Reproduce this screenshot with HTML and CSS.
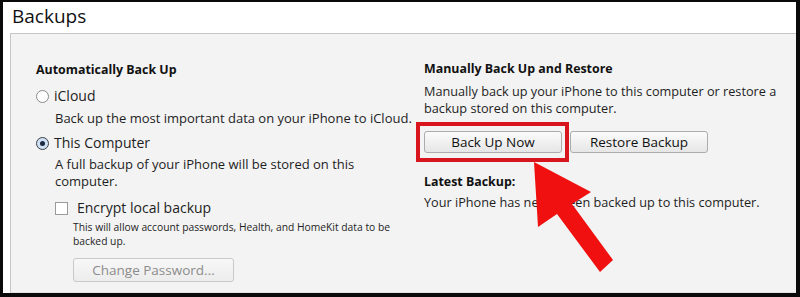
FILE: index.html
```html
<!DOCTYPE html>
<html>

<head>
    <meta charset="UTF-8">
    <title>Backups</title>
    <link rel="stylesheet" href="styles.css">
</head>

<body>
    <div class="window">
        <div class="title">Backups</div>
        <div class="panel">
            <div class="col col-auto">
                <h3>Automatically Back Up</h3>
                <div class="option option-icloud"><span class="radio"></span>iCloud</div>
                <p class="desc">Back up the most important data on your iPhone to iCloud.</p>
                <div class="option option-computer"><span class="radio checked"></span>This Computer</div>
                <p class="desc">A full backup of your iPhone will be stored on this<br>computer.</p>
                <div class="encrypt">
                    <div class="check"><span class="box"></span>Encrypt local backup</div>
                    <p class="note">This will allow account passwords, Health, and HomeKit data to be<br>backed up.</p>
                    <button class="btn btn-disabled">Change Password...</button>
                </div>
            </div>
            <div class="col col-manual">
                <h3>Manually Back Up and Restore</h3>
                <p class="desc">Manually back up your iPhone to this computer or restore a<br>backup stored on this computer.</p>
                <div class="buttons">
                    <span class="mark"><button class="btn">Back Up Now</button></span>
                    <button class="btn">Restore Backup</button>
                </div>
                <h3 class="latest">Latest Backup:</h3>
                <p class="desc">Your iPhone has never been backed up to this computer.</p>
            </div>
        </div>
    </div>
    <svg class="arrow" viewBox="0 0 800 297" width="800" height="297">
        <polygon fill="#f01010" points="534,162 538,227 557,214 600,272 613,260 572,204 591,192" />
    </svg>
</body>

</html>
```

FILE: styles.css
```css
body {
    margin: 0;
    width: 800px;
    height: 297px;
    position: relative;
    background-color: #0a0a0a;
    font-family: "Open Sans", "Noto Sans", sans-serif;
    font-size: 13px;
    line-height: 17px;
    color: #1e1e1e;
    overflow: hidden;
}

.window {
    position: absolute;
    top: 2px;
    left: 3px;
    right: 4px;
    bottom: 4px;
    display: flex;
    flex-direction: column;
    background-color: #fff;
}

.title {
    height: 31px;
    padding-left: 9px;
    font-size: 19px;
    line-height: 28px;
    color: #111;
}

.panel {
    flex: 1;
    margin-left: 7px;
    border-top: 1px solid #c6c6c6;
    border-left: 1px solid #c6c6c6;
    border-bottom: 1px solid #e2e2e2;
    background-color: #f3f3f3;
    display: flex;
}

.col-auto {
    width: 388px;
    padding: 27px 0 0 25px;
}

.col-manual {
    padding-top: 26px;
}

h3 {
    margin: 0;
    font-size: 12.4px;
    font-weight: 700;
    color: #111;
}

p {
    margin: 0;
}

.option {
    display: flex;
    align-items: center;
    font-size: 14px;
    line-height: 18px;
}

.option-icloud {
    margin-top: 9px;
}

.option-computer {
    margin-top: 7px;
}

.option + .desc {
    margin-top: 5px;
    padding-left: 19px;
}

.option-computer + .desc {
    margin-top: 4px;
}

.radio {
    width: 11px;
    height: 11px;
    margin-right: 5px;
    border: 1px solid #8a8a8a;
    border-radius: 50%;
    background-color: #fff;
    position: relative;
}

.radio.checked {
    border-color: #3a3f47;
    background-color: #cfe1f3;
}

.radio.checked::after {
    content: "";
    position: absolute;
    top: 3px;
    left: 3px;
    width: 5px;
    height: 5px;
    border-radius: 50%;
    background-color: #1c2a40;
}

.encrypt {
    padding-left: 19px;
    margin-top: 9px;
}

.check {
    display: flex;
    align-items: center;
    font-size: 14px;
    line-height: 18px;
}

.box {
    width: 11px;
    height: 11px;
    margin-right: 9px;
    border: 1px solid #9a9a9a;
    background-color: #fff;
}

.note {
    margin-top: 3px;
    padding-left: 18px;
    font-size: 10.3px;
    line-height: 14px;
}

.btn {
    display: block;
    height: 22px;
    padding: 0;
    font-family: inherit;
    font-size: 13.5px;
    color: #111;
    background: linear-gradient(#fbfbfb, #e6e6e6);
    border: 1px solid #acacac;
    border-radius: 3px;
    width: 138px;
}

.btn-disabled {
    margin: 10px 0 0 18px;
    width: 161px;
    height: 24px;
    color: #8c8c8c;
    background: linear-gradient(#f7f7f7, #ececec);
    border-color: #c9c9c9;
}

.col-manual .desc {
    margin-top: 6px;
    font-size: 12.7px;
}

.buttons {
    display: flex;
    gap: 8px;
    margin-top: 14px;
}

.mark {
    position: relative;
}

.mark::after {
    content: "";
    position: absolute;
    top: -9px;
    left: -8px;
    right: -7px;
    bottom: -9px;
    border: 4px solid #d8151c;
}

.latest {
    margin-top: 20px;
}

.latest + .desc {
    margin-top: 4px;
}

.arrow {
    position: absolute;
    top: 0;
    left: 0;
    pointer-events: none;
}
```
